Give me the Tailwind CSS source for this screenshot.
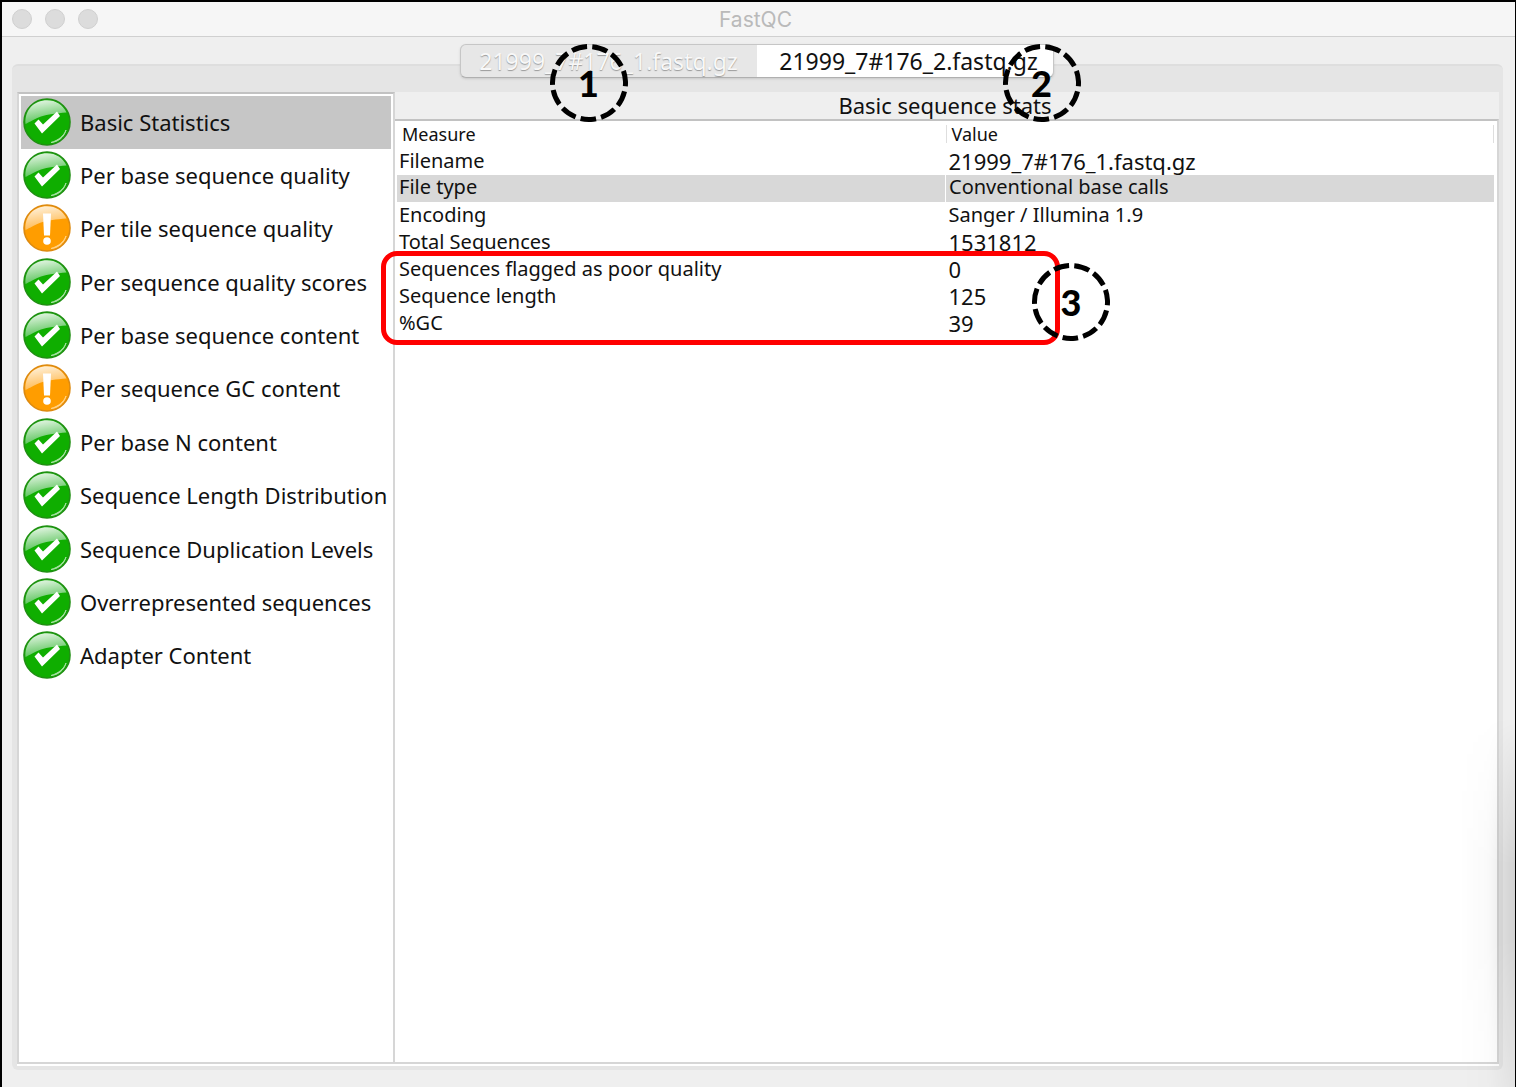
<!DOCTYPE html>
<html lang="en">
<head>
<meta charset="utf-8">
<title>FastQC</title>
<script src="https://cdn.jsdelivr.net/npm/@tailwindcss/browser@4"></script>
</head>
<body class="bg-[#efefef] font-['Noto_Sans',sans-serif] text-[#111]">

<svg class="absolute size-0" aria-hidden="true">
  <defs>
    <linearGradient id="pass-gloss" x1="0.2" y1="0" x2="0.5" y2="1">
      <stop offset="0" stop-color="#e9f7e9"/><stop offset="1" stop-color="#4dbf4d"/>
    </linearGradient>
    <linearGradient id="warn-gloss" x1="0.2" y1="0" x2="0.5" y2="1">
      <stop offset="0" stop-color="#fff3df"/><stop offset="1" stop-color="#ffb545"/>
    </linearGradient>
    <symbol id="pass" viewBox="0 0 48 48">
      <circle cx="24" cy="24" r="23" fill="#0fae00" stroke="#1f8f12" stroke-width="1.6"/>
      <path d="M2.500 26C1.500 12 11 2.300 24 2.300c9 0 16 4.700 19.500 12.200C33 15.500 25 16 18 18.500 11 21 7 24 2.500 26z" fill="url(#pass-gloss)"/>
      <path d="M43 32c-2 6-8 10.500-15 12.500 7-.5 13-5 15-12.500z" fill="#d5f2d0" stroke="#a5dfa0" stroke-width="1"/>
      <path d="M11.500 25.500l4-4 4.500 5L34 13.500l3 4.500-18 17.500z" fill="#fff"/>
    </symbol>
    <symbol id="warn" viewBox="0 0 48 48">
      <circle cx="24" cy="24" r="23" fill="#ff9d00" stroke="#dd8a10" stroke-width="1.6"/>
      <path d="M2.500 26C1.500 12 11 2.300 24 2.300c9 0 16 4.700 19.500 12.200C33 15.500 25 16 18 18.500 11 21 7 24 2.500 26z" fill="url(#warn-gloss)"/>
      <path d="M43 32c-2 6-8 10.500-15 12.500 7-.5 13-5 15-12.500z" fill="#ffe9c2" stroke="#ffd184" stroke-width="1"/>
      <path d="M20 9.500h8l-1 22h-6z" fill="#fff"/><circle cx="24" cy="37" r="3.800" fill="#fff"/>
    </symbol>
    <symbol id="ring" viewBox="0 0 78 78">
      <circle cx="39" cy="39" r="36.500" fill="none" stroke="#000" stroke-width="5" pathLength="1100" stroke-dasharray="75 25" transform="rotate(177 39 39)"/>
    </symbol>
  </defs>
</svg>

<div class="relative flex min-h-screen flex-col overflow-hidden border-t-2 border-r border-l-2 border-black">
  <header class="flex h-[35px] items-center border-b border-[#d0d0d0] bg-[#f6f6f6]">
    <div class="flex flex-1 gap-[13px] pl-[10px]">
      <button aria-label="Close" class="size-5 rounded-full border border-[#d0d0d0] bg-[#dcdcdc]"></button>
      <button aria-label="Minimize" class="size-5 rounded-full border border-[#d0d0d0] bg-[#dcdcdc]"></button>
      <button aria-label="Zoom" class="size-5 rounded-full border border-[#d0d0d0] bg-[#dcdcdc]"></button>
    </div>
    <h1 class="pt-[2px] font-[Inter] text-[21px] leading-6 text-[#bababa]">FastQC</h1>
    <div class="flex-1 pl-4"></div>
  </header>

  <div class="relative z-10 mt-[7px] mr-1 -mb-[14px] flex self-center rounded-md border border-[#c6c6c6] border-b-[#b0b0b0] bg-[#e7e7e7] text-[23px] leading-8 shadow-sm" role="tablist">
    <button role="tab" class="relative w-[296px] text-[#f8f8f8] [text-shadow:0_1px_1px_#999]">21999_7#176_1.fastq.gz
      <span class="absolute top-[-1px] left-[89px] flex size-[78px] items-center justify-center font-[Lato] text-[36px] font-black text-black [text-shadow:none]"><svg class="absolute inset-0 size-full"><use href="#ring"/></svg>1</span>
    </button>
    <button role="tab" aria-selected="true" class="relative w-[296px] rounded-r-md bg-white pl-2">21999_7#176_2.fastq.gz
      <span class="absolute top-[-1px] left-[246px] flex size-[78px] items-center justify-center font-[Lato] text-[36px] font-black text-black"><svg class="absolute inset-0 size-full"><use href="#ring"/></svg>2</span>
    </button>
  </div>

  <div class="mr-3 mb-[17px] ml-[10px] flex flex-1 flex-col rounded-md border-t-2 border-[#dedede] bg-[#e5e5e5] pt-[26px] pr-1 pb-1 pl-[5px]">
    <div class="flex flex-1 border-b-2 border-white">
      <nav class="w-[378px] shrink-0 border-x-2 border-t-2 border-b-2 border-x-[#d6d6d6] border-t-[#c2c2c2] border-b-[#d6d6d6] bg-white px-[2px] pt-[2px]">
        <div class="grid min-h-[587px] auto-rows-fr text-[22px] leading-8 whitespace-nowrap">
          <button class="flex items-center gap-[9px] bg-[#c6c6c6] pb-[2px] pl-[2px]"><svg class="size-12 shrink-0"><use href="#pass"/></svg>Basic Statistics</button>
          <button class="flex items-center gap-[9px] pb-[2px] pl-[2px]"><svg class="size-12 shrink-0"><use href="#pass"/></svg>Per base sequence quality</button>
          <button class="flex items-center gap-[9px] pb-[2px] pl-[2px]"><svg class="size-12 shrink-0"><use href="#warn"/></svg>Per tile sequence quality</button>
          <button class="flex items-center gap-[9px] pb-[2px] pl-[2px]"><svg class="size-12 shrink-0"><use href="#pass"/></svg>Per sequence quality scores</button>
          <button class="flex items-center gap-[9px] pb-[2px] pl-[2px]"><svg class="size-12 shrink-0"><use href="#pass"/></svg>Per base sequence content</button>
          <button class="flex items-center gap-[9px] pb-[2px] pl-[2px]"><svg class="size-12 shrink-0"><use href="#warn"/></svg>Per sequence GC content</button>
          <button class="flex items-center gap-[9px] pb-[2px] pl-[2px]"><svg class="size-12 shrink-0"><use href="#pass"/></svg>Per base N content</button>
          <button class="flex items-center gap-[9px] pb-[2px] pl-[2px]"><svg class="size-12 shrink-0"><use href="#pass"/></svg>Sequence Length Distribution</button>
          <button class="flex items-center gap-[9px] pb-[2px] pl-[2px]"><svg class="size-12 shrink-0"><use href="#pass"/></svg>Sequence Duplication Levels</button>
          <button class="flex items-center gap-[9px] pb-[2px] pl-[2px]"><svg class="size-12 shrink-0"><use href="#pass"/></svg>Overrepresented sequences</button>
          <button class="flex items-center gap-[9px] pb-[2px] pl-[2px]"><svg class="size-12 shrink-0"><use href="#pass"/></svg>Adapter Content</button>
        </div>
      </nav>

      <main class="flex min-w-0 flex-1 flex-col bg-[#efefef]">
        <h2 class="pr-1 text-center text-[22px] leading-[27px]">Basic sequence stats</h2>
        <div class="relative flex-1 border-t-2 border-r-2 border-b-2 border-t-[#c2c2c2] border-r-[#d6d6d6] border-b-[#d6d6d6] bg-white pr-[3px] pl-[2px]">
          <table class="w-full table-fixed border-collapse text-left text-[20px] leading-[24px] [&_td]:h-[27px] [&_td]:pt-0 [&_td]:pr-0 [&_td]:pb-[2px]">
            <thead class="text-[18px]">
              <tr class="h-[27px]">
                <th class="p-0 pb-[2px] pl-[5px] font-normal">Measure</th>
                <th class="p-0 pb-[2px] font-normal"><div class="flex h-[18px] items-center border-x border-[#dedede] pl-[5px]">Value</div></th>
              </tr>
            </thead>
            <tbody>
              <tr><td class="pl-[2px]">Filename</td><td class="pl-[3px] text-[22px]">21999_7#176_1.fastq.gz</td></tr>
              <tr><td class="border-r border-b border-white bg-[#d8d8d8] bg-clip-padding pl-[2px]">File type</td><td class="border-b border-white bg-[#d8d8d8] bg-clip-padding pl-[3px]">Conventional base calls</td></tr>
              <tr><td class="pl-[2px]">Encoding</td><td class="pl-[3px]">Sanger / Illumina 1.9</td></tr>
              <tr><td class="pl-[2px]">Total Sequences</td><td class="pl-[3px] text-[22px]">1531812</td></tr>
              <tr><td class="pl-[2px]">Sequences flagged as poor quality</td><td class="pl-[3px] text-[22px]">0</td></tr>
              <tr><td class="pl-[2px]">Sequence length</td><td class="pl-[3px] text-[22px]">125</td></tr>
              <tr><td class="pl-[2px]">%GC</td><td class="pl-[3px] text-[22px]">39</td></tr>
            </tbody>
          </table>
          <div class="absolute top-[130px] left-[-14px] h-[94px] w-[679px] rounded-2xl border-[5px] border-[#f00]"></div>
          <span class="absolute top-[142px] left-[637px] flex size-[78px] items-center justify-center font-[Lato] text-[36px] font-black text-black"><svg class="absolute inset-0 size-full"><use href="#ring"/></svg>3</span>
        </div>
      </main>
    </div>
  </div>

  <div class="pointer-events-none absolute right-0 bottom-0 h-[370px] w-14 bg-linear-to-l from-black/12 via-black/2 to-transparent [mask-image:linear-gradient(to_bottom,transparent,black_40%,black_60%,rgb(0_0_0/0.4))]"></div>
</div>
</body>
</html>
